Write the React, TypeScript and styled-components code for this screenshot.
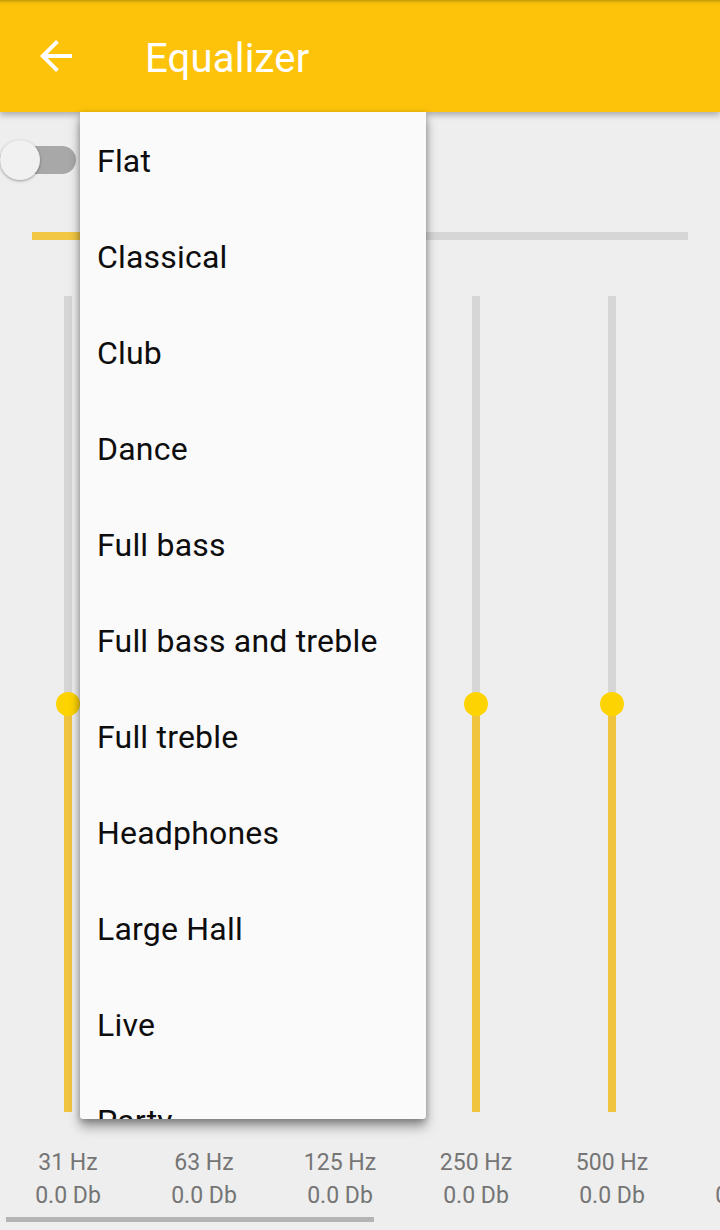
import styled, { createGlobalStyle } from 'styled-components';

const GlobalStyle = createGlobalStyle`
  html, body {
    margin: 0;
    padding: 0;
    background: #eeeeee;
    font-family: Roboto, 'Noto Sans', sans-serif;
  }
`;

const presets = [
  'Flat',
  'Classical',
  'Club',
  'Dance',
  'Full bass',
  'Full bass and treble',
  'Full treble',
  'Headphones',
  'Large Hall',
  'Live',
  'Party',
  'Pop',
  'Reggae',
  'Rock',
];

const bands = [
  { freq: '31 Hz', level: 50 },
  { freq: '63 Hz', level: 50 },
  { freq: '125 Hz', level: 50 },
  { freq: '250 Hz', level: 50 },
  { freq: '500 Hz', level: 50 },
  { freq: '1 kHz', level: 50 },
];

const App = () => {
  return (
    <Screen>
      <GlobalStyle />
      <AppBar>
        <BackButton aria-label="back">
          <svg width="48" height="48" viewBox="0 0 24 24">
            <path fill="#fff" d="M20 11H7.83l5.59-5.59L12 4l-8 8 8 8 1.41-1.41L7.83 13H20v-2z" />
          </svg>
        </BackButton>
        <Title>Equalizer</Title>
      </AppBar>

      <Content>
        <SwitchRow>
          <Switch>
            <SwitchTrack />
            <SwitchThumb />
          </Switch>
        </SwitchRow>

        <BoostBar>
          <BoostFill style={{ width: '8%' }} />
        </BoostBar>

        <Bands>
          {bands.map(b => (
            <Band key={b.freq}>
              <Track>
                <TrackFill style={{ height: `${b.level}%` }} />
                <Thumb style={{ bottom: `${b.level}%` }} />
              </Track>
              <Freq>{b.freq}</Freq>
              <Gain>0.0 Db</Gain>
            </Band>
          ))}
        </Bands>

        <ScrollIndicator />
      </Content>

      <Menu>
        {presets.map(p => (
          <MenuItem key={p}>{p}</MenuItem>
        ))}
      </Menu>
    </Screen>
  );
};

export default App;

// Estilos
const Screen = styled.div`
  position: relative;
  width: 720px;
  height: 1230px;
  overflow: hidden;
  background: #eeeeee;
`;

const AppBar = styled.header`
  position: relative;
  z-index: 2;
  display: flex;
  align-items: center;
  height: 112px;
  background: linear-gradient(to bottom, #c29a08 0, #f3bd0a 3px, #fcc30a 7px);
  box-shadow: 0 3px 6px rgba(0, 0, 0, 0.28);
`;

const BackButton = styled.button`
  display: flex;
  align-items: center;
  justify-content: center;
  width: 48px;
  height: 48px;
  margin-left: 32px;
  padding: 0;
  border: none;
  background: transparent;
  cursor: pointer;
`;

const Title = styled.h1`
  margin: 0 0 0 65px;
  padding-top: 4px;
  font-family: Roboto, sans-serif;
  font-weight: 400;
  font-size: 40px;
  letter-spacing: 0.2px;
  color: #ffffff;
`;

const Content = styled.main`
  display: flex;
  flex-direction: column;
`;

const SwitchRow = styled.div`
  display: flex;
  height: 40px;
  margin-top: 28px;
`;

const Switch = styled.div`
  position: relative;
  width: 76px;
  height: 40px;
`;

const SwitchTrack = styled.div`
  margin-top: 6px;
  width: 76px;
  height: 28px;
  border-radius: 14px;
  background: #a8a8a8;
`;

const SwitchThumb = styled.div`
  position: absolute;
  left: 0;
  top: 0;
  width: 40px;
  height: 40px;
  border-radius: 50%;
  background: #f1f1f1;
  box-shadow: 0 1px 3px rgba(0, 0, 0, 0.35);
`;

const BoostBar = styled.div`
  display: flex;
  margin: 52px 32px 0;
  height: 8px;
  background: #d6d6d6;
`;

const BoostFill = styled.div`
  height: 100%;
  background: #f2c744;
`;

const Bands = styled.div`
  display: flex;
  margin-top: 56px;
  overflow: hidden;
`;

const Band = styled.div`
  flex: 0 0 136px;
  display: flex;
  flex-direction: column;
  align-items: center;
`;

const Track = styled.div`
  position: relative;
  display: flex;
  flex-direction: column;
  justify-content: flex-end;
  width: 8px;
  height: 816px;
  background: #d6d6d6;
`;

const TrackFill = styled.div`
  width: 100%;
  background: #f0c43f;
`;

const Thumb = styled.div`
  position: absolute;
  left: 50%;
  width: 24px;
  height: 24px;
  margin-bottom: -12px;
  transform: translateX(-50%);
  border-radius: 50%;
  background: #fdd400;
`;

const Freq = styled.div`
  margin-top: 34px;
  font-size: 23px;
  line-height: 33px;
  color: #757575;
  white-space: nowrap;
`;

const Gain = styled(Freq)`
  margin-top: 0;
`;

const ScrollIndicator = styled.div`
  width: 368px;
  height: 5px;
  margin: 5px 0 0 6px;
  background: #b4b4b4;
`;

const Menu = styled.ul`
  position: absolute;
  z-index: 3;
  top: 112px;
  left: 80px;
  width: 346px;
  height: 1006px;
  margin: 0;
  padding: 1px 0 0;
  list-style: none;
  overflow: hidden;
  background: #fafafa;
  border-radius: 0 0 3px 3px;
  box-shadow: 0 8px 12px rgba(0, 0, 0, 0.35), 0 2px 6px rgba(0, 0, 0, 0.25);
`;

const MenuItem = styled.li`
  display: flex;
  align-items: center;
  height: 96px;
  padding: 0 16px 0 17px;
  font-size: 32px;
  letter-spacing: 0.2px;
  color: #0d0d0d;
  white-space: nowrap;
`;
